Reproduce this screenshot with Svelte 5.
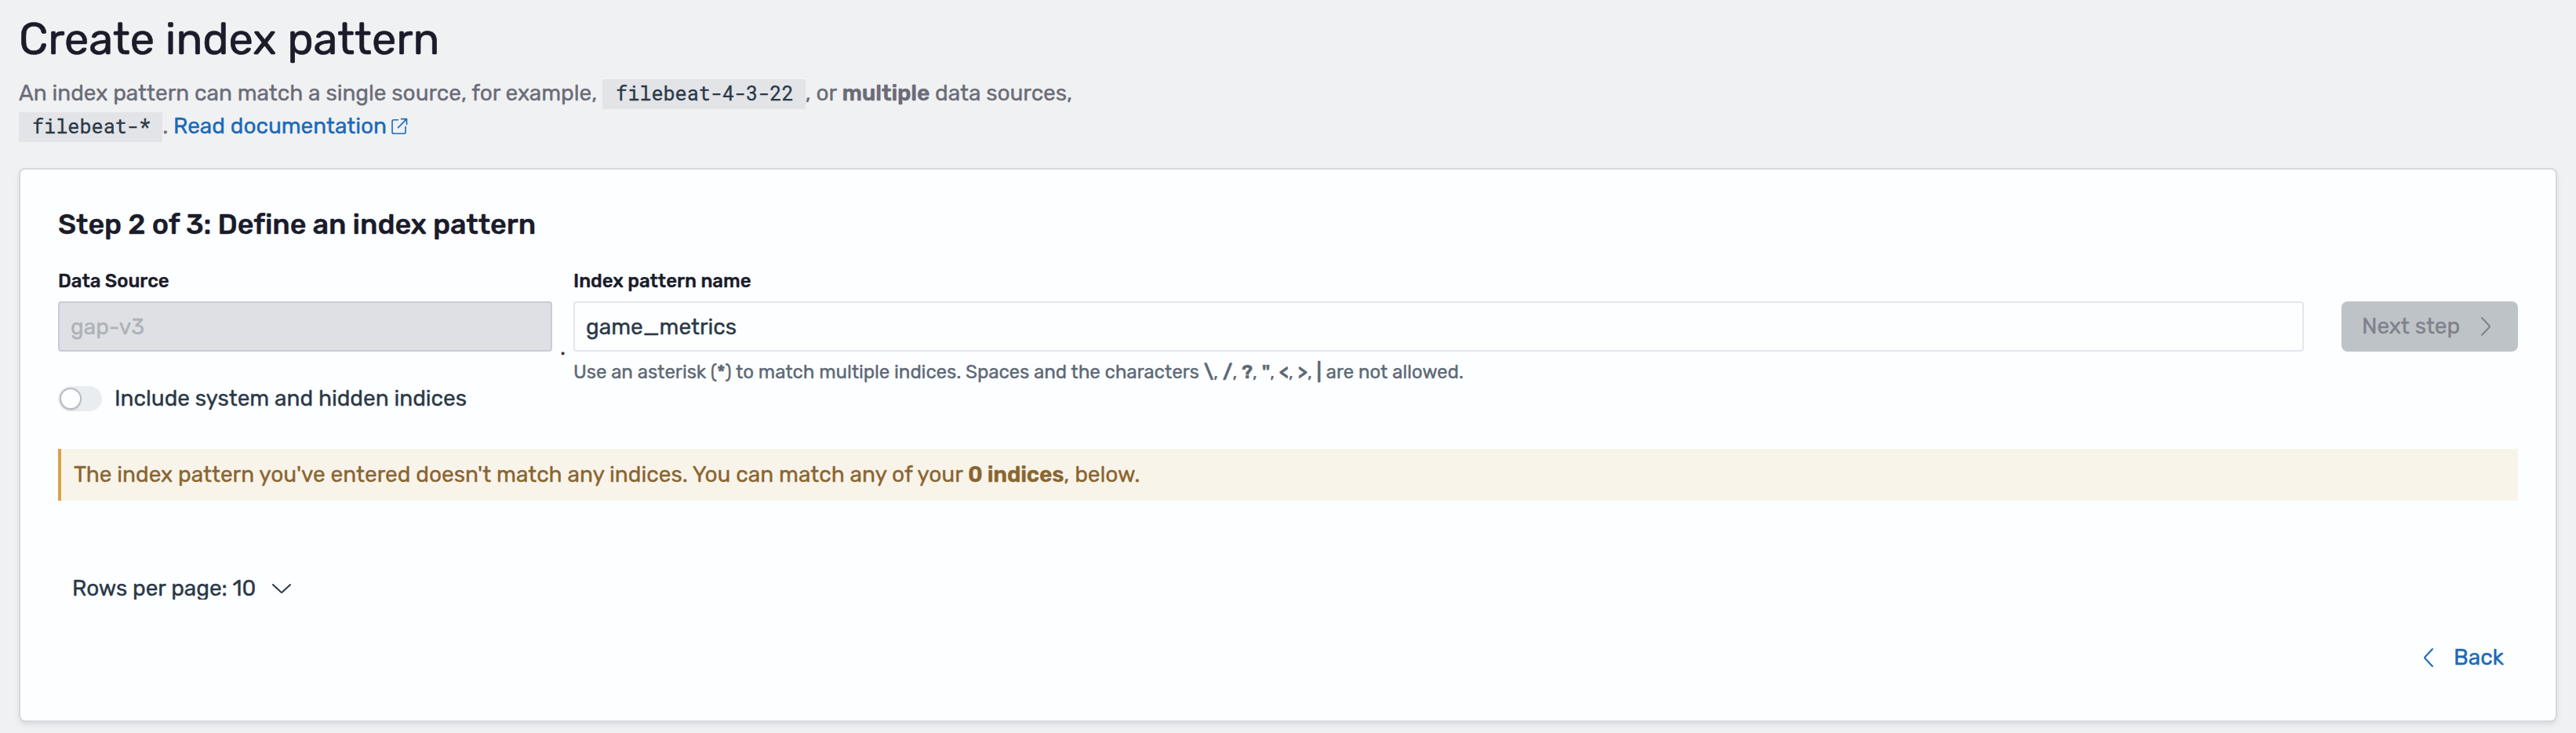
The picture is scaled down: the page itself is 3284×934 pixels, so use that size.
<script>
  const source = 'gap-v3';
  const pattern = 'game_metrics';
  const forbidden = ['\\', '/', '?', '"', '<', '>'];
</script>

<main class="page">
  <h1>Create index pattern</h1>
  <p class="intro">
    An index pattern can match a single source, for example, <code>filebeat-4-3-22</code>, or <strong>multiple</strong> data sources,<br /><code>filebeat-*</code>. <a href="#docs">Read documentation<svg class="popout" width="24" height="24" viewBox="0 0 24 24"><path d="M11.5 4.8H6a2 2 0 0 0-2 2v13.4a2 2 0 0 0 2 2h13a2 2 0 0 0 2-2v-6.7" /><path d="M15.5 3.6h7v7M22.2 3.9 11.5 14.6" /></svg></a>
  </p>

  <section class="panel">
    <h2>Step 2 of 3: Define an index pattern</h2>

    <div class="form">
      <div class="source">
        <div class="label">Data Source</div>
        <div class="field disabled">{source}</div>
        <div class="switch">
          <span class="track"><span class="thumb"></span></span>
          <span>Include system and hidden indices</span>
        </div>
      </div>
      <div class="dot">.</div>
      <div class="pattern">
        <div class="label">Index pattern name</div>
        <div class="field">{pattern}</div>
        <div class="help">Use an asterisk (<strong>*</strong>) to match multiple indices. Spaces and the characters {#each forbidden as ch}<strong>{ch}</strong>,{' '}{/each}<strong>|</strong> are not allowed.</div>
      </div>
      <button class="next" disabled>
        <span>Next step</span>
        <svg width="32" height="32" viewBox="0 0 32 32"><path d="m11 5 9.6 10.2a1.2 1.2 0 0 1 0 1.6L11 27" /></svg>
      </button>
    </div>

    <div class="callout">The index pattern you've entered doesn't match any indices. You can match any of your <strong>0 indices</strong>, below.</div>

    <div class="rows">
      <span class="rowstext">Rows per page: 10</span>
      <svg width="32" height="32" viewBox="0 0 32 32"><path d="m5 11 10.2 9.6a1.2 1.2 0 0 0 1.6 0L27 11" /></svg>
    </div>

    <div class="back">
      <svg width="32" height="32" viewBox="0 0 32 32"><path d="M21 5 11.4 15.2a1.2 1.2 0 0 0 0 1.6L21 27" /></svg>
      <span>Back</span>
    </div>
  </section>
</main>

<style>
  :global(body) {
    background: #f0f1f3;
  }
  .page {
    box-sizing: border-box;
    height: 934px;
    padding: 18px 24px 14px;
    overflow: hidden;
    background: #f0f1f3;
    color: #2a3947;
    font: 400 28px/42px Rubik, Roboto, sans-serif;
    letter-spacing: -0.02px;
    -webkit-text-stroke: 0.35px currentColor;
  }
  h1 {
    margin: 0;
    color: #1a1c2a;
    font-size: 56px;
    font-weight: 400;
    line-height: 64px;
    -webkit-text-stroke-width: 0.6px;
  }
  .intro {
    height: 84px;
    margin: 16px 0 32px;
    color: #6a6c77;
    white-space: nowrap;
  }
  strong {
    font-weight: 600;
    letter-spacing: -0.1px;
  }
  code {
    padding: 1px 15px 4px 17px;
    background: #e3e4e8;
    color: #2a3947;
    font: 400 25.2px/1 'Roboto Mono', 'DejaVu Sans Mono', monospace;
    letter-spacing: 0;
  }
  a {
    color: #1a69b9;
    text-decoration: none;
  }
  svg {
    fill: none;
    stroke: currentColor;
    stroke-width: 2;
    stroke-linecap: round;
    stroke-linejoin: round;
    flex: none;
  }
  .popout {
    margin-left: 3px;
    vertical-align: -2px;
    stroke-width: 1.6;
  }
  .panel {
    box-sizing: border-box;
    height: 706px;
    padding: 48px;
    border: 2px solid #d6d8dc;
    border-radius: 8px;
    background: #fdfeff;
    box-shadow: 0 4px 8px -2px rgba(120, 130, 145, 0.25);
  }
  h2 {
    margin: 0 0 32px;
    color: #1a1c2a;
    font-size: 36px;
    font-weight: 500;
    line-height: 44px;
    letter-spacing: -0.08px;
  }
  .form {
    display: flex;
    align-items: flex-start;
  }
  .source {
    width: 630px;
  }
  .label {
    margin-bottom: 8px;
    color: #1a1c2a;
    font-size: 24px;
    font-weight: 500;
    line-height: 36px;
  }
  .field {
    box-sizing: border-box;
    height: 64px;
    padding: 0 14px;
    border: 2px solid #e1e7ee;
    border-radius: 4px;
    line-height: 62px;
  }
  .disabled {
    border-color: #c8ccd5;
    background: #dfe0e4;
    color: #acb2b8;
  }
  .switch {
    display: flex;
    align-items: center;
    gap: 16px;
    height: 32px;
    margin-top: 44px;
  }
  .track {
    box-sizing: border-box;
    width: 56px;
    height: 32px;
    padding: 2px;
    border-radius: 16px;
    background: #eaedf0;
  }
  .thumb {
    display: block;
    box-sizing: border-box;
    width: 28px;
    height: 28px;
    border: 2px solid #b9bbc1;
    border-radius: 50%;
    background: #fdfeff;
    box-shadow: 0 2px 2px -1px rgba(100, 110, 120, 0.25);
  }
  .dot {
    width: 27px;
    margin-top: 82px;
    text-align: center;
  }
  .pattern {
    flex: 1;
  }
  .help {
    margin-top: 8px;
    color: #5d6975;
    font-size: 24px;
    line-height: 36px;
    letter-spacing: -0.04px;
  }
  .next {
    display: flex;
    align-items: center;
    justify-content: space-between;
    width: 225px;
    height: 64px;
    margin: 44px 0 0 48px;
    padding: 0 25px 0 26px;
    border: 0;
    border-radius: 8px;
    background: #bec3c7;
    color: #7e828c;
    font: inherit;
    letter-spacing: inherit;
  }
  .callout {
    box-sizing: border-box;
    height: 66px;
    margin-top: 48px;
    padding: 12px 16px;
    border-left: 4px solid #dba04a;
    background: #f9f4ea;
    color: #8a6530;
    letter-spacing: 0;
  }
  .rows {
    display: flex;
    align-items: center;
    gap: 17px;
    height: 28px;
    margin: 98px 0 0 18px;
  }
  .rowstext {
    height: 28px;
    overflow: hidden;
    line-height: 28px;
  }
  .back {
    display: flex;
    align-items: center;
    justify-content: flex-end;
    gap: 16px;
    margin-top: 53px;
    padding-right: 18px;
    color: #1a69b9;
  }
</style>
